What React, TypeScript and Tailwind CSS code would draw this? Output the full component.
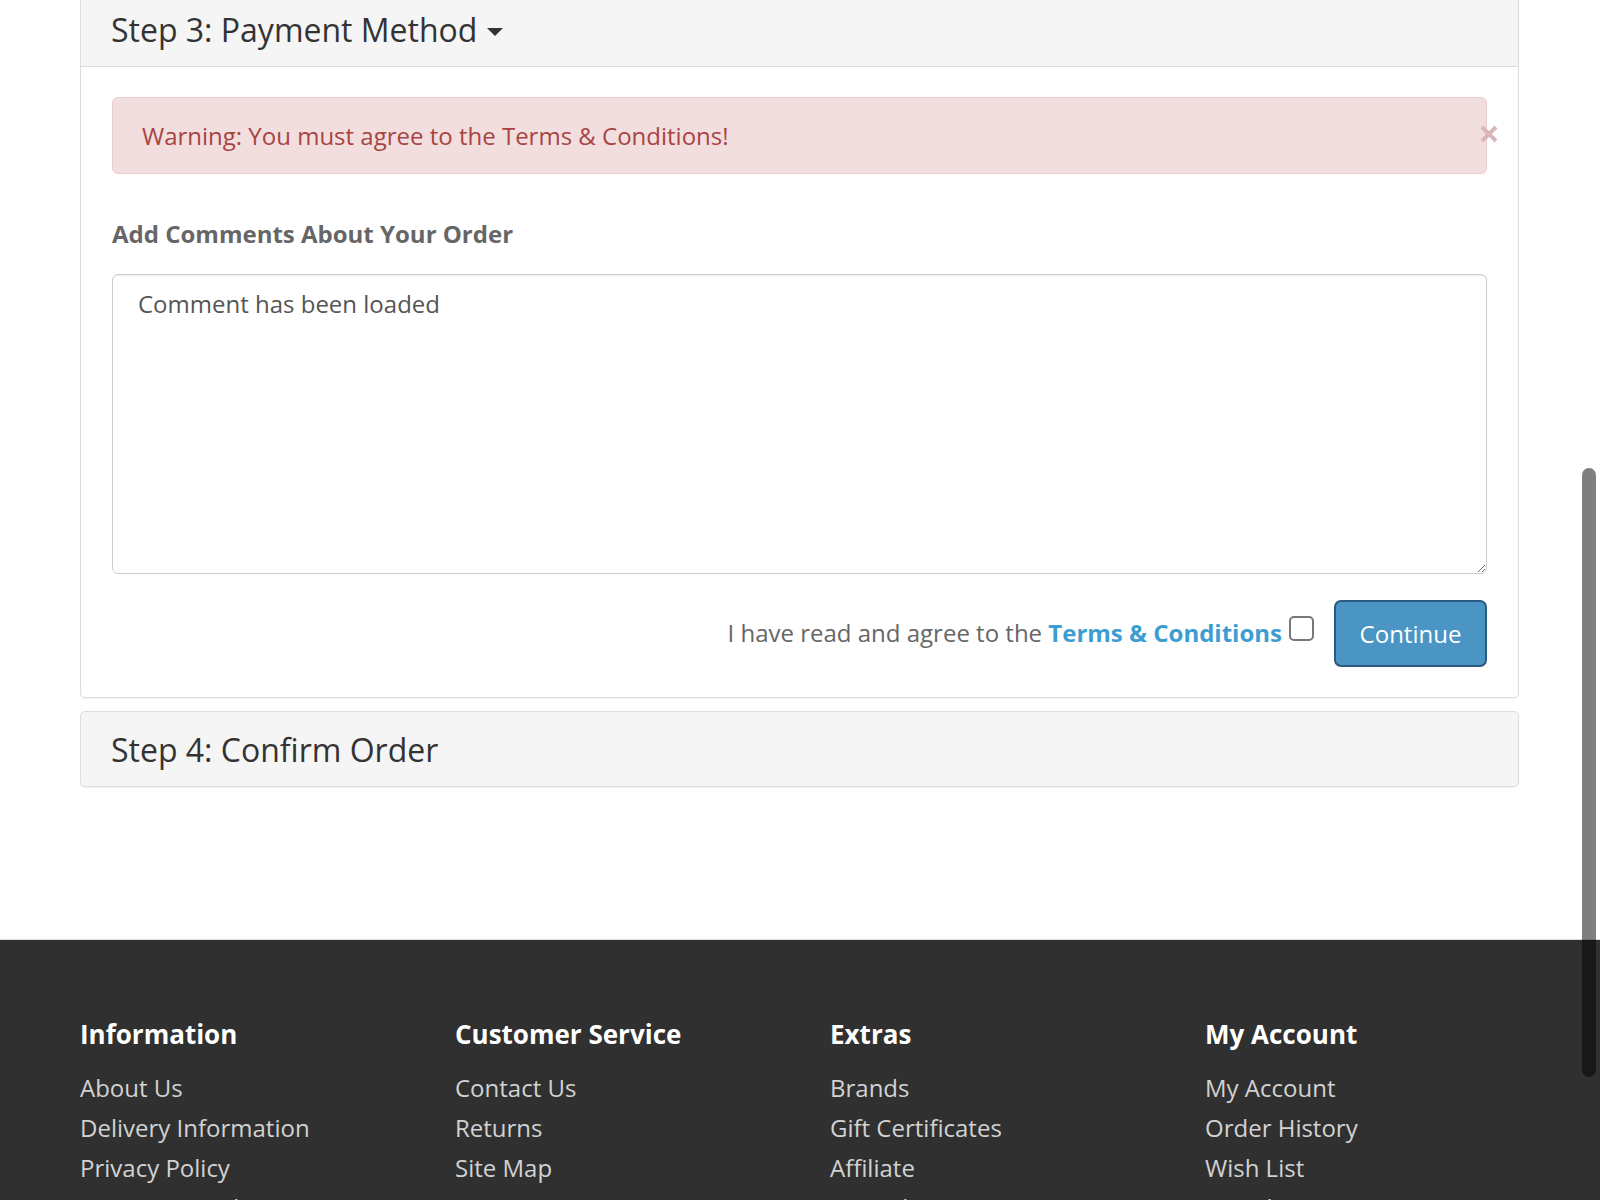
import { useState } from "react";

const footerColumns = [
  {
    title: "Information",
    links: ["About Us", "Delivery Information", "Privacy Policy", "Terms & Conditions"],
  },
  {
    title: "Customer Service",
    links: ["Contact Us", "Returns", "Site Map"],
  },
  {
    title: "Extras",
    links: ["Brands", "Gift Certificates", "Affiliate", "Specials"],
  },
  {
    title: "My Account",
    links: ["My Account", "Order History", "Wish List", "Newsletter"],
  },
];

const Caret = () => (
  <svg width="16" height="9" viewBox="0 0 16 9" className="ml-[10px] mt-[4px] inline-block">
    <polygon points="0,0 16,0 8,8" fill="#333" />
  </svg>
);

export default function App() {
  const [comment, setComment] = useState("Comment has been loaded");
  const [agree, setAgree] = useState(false);

  return (
    <div
      className="min-h-screen bg-white text-[24px] leading-[34px] text-[#666]"
      style={{ fontFamily: '"Open Sans", "Noto Sans", sans-serif' }}
    >
      <div className="pl-[80px] pr-[81px]">
        {/* Step 3 panel, scrolled so its top edge is out of view */}
        <div className="border-x border-b border-[#ddd] rounded-b-[5px] shadow-[0_1px_1px_rgba(0,0,0,0.05)]">
          <div className="bg-[#f5f5f5] border-b border-[#ddd] pl-[30px] pt-[12px] pb-[18px]">
            <h4 className="flex items-center text-[32px] leading-[36px] text-[#333]">
              Step 3: Payment Method
              <Caret />
            </h4>
          </div>

          <div className="px-[31px] pt-[30px] pb-[30px]">
            <div className="relative bg-[#f2dede] border border-[#ebccd1] rounded-[6px] text-[#a94442] pl-[29px] py-[20px] leading-[35px]">
              Warning: You must agree to the Terms &amp; Conditions!
              <button className="absolute right-[-14px] top-[25px] w-[22px] h-[22px] flex items-center justify-center text-[#dab6ba]">
                <svg width="18" height="18" viewBox="0 0 18 18">
                  <path d="M2 2 L16 16 M16 2 L2 16" stroke="currentColor" strokeWidth="4" />
                </svg>
              </button>
            </div>

            <p className="mt-[43px] font-bold text-[#666]">Add Comments About Your Order</p>

            <textarea
              value={comment}
              onChange={(e) => setComment(e.target.value)}
              className="mt-[23px] block w-full h-[300px] border border-[#ccc] rounded-[6px] px-[25px] py-[12px] text-[#555] outline-none shadow-[inset_0_1px_1px_rgba(0,0,0,0.075)]"
            />

            <div className="mt-[26px] flex justify-end items-center">
              <span className="text-[#666] mb-[2px]">
                I have read and agree to the{" "}
                <a href="#" className="font-bold text-[#3d9dd1]">
                  Terms &amp; Conditions
                </a>
              </span>
              <button
                onClick={() => setAgree(!agree)}
                className={`ml-[7px] mb-[10px] w-[25px] h-[25px] rounded-[5px] border-2 border-[#777] ${agree ? "bg-[#3d9dd1]" : "bg-white"}`}
              />
              <button className="ml-[20px] h-[67px] w-[153px] rounded-[7px] border-2 border-[#2b5a80] bg-[#4a95c3] text-white text-[24px]">
                Continue
              </button>
            </div>
          </div>
        </div>

        {/* Step 4 panel */}
        <div className="mt-[13px] border border-[#ddd] rounded-[5px] bg-[#f5f5f5] shadow-[0_1px_1px_rgba(0,0,0,0.05)] pl-[30px] pt-[20px] pb-[18px]">
          <h4 className="text-[32px] leading-[36px] text-[#333]">Step 4: Confirm Order</h4>
        </div>
      </div>

      <footer className="mt-[152px] border-t border-[#ddd] bg-[#303030] pt-[76px] pb-[40px]">
        <div className="pl-[80px] grid grid-cols-[375px_375px_375px_375px]">
          {footerColumns.map((col) => (
            <div key={col.title}>
              <h5 className="text-white font-bold text-[26px] leading-[36px] mb-[16px]">{col.title}</h5>
              <ul>
                {col.links.map((link) => (
                  <li key={link} className="leading-[40px]">
                    <a href="#" className="text-[#d2d2d2] text-[24px]">
                      {link}
                    </a>
                  </li>
                ))}
              </ul>
            </div>
          ))}
        </div>
      </footer>

      {/* overlay scrollbar thumb */}
      <div className="fixed right-[4px] top-[468px] w-[14px] h-[609px] rounded-full bg-black/50" />
    </div>
  );
}
